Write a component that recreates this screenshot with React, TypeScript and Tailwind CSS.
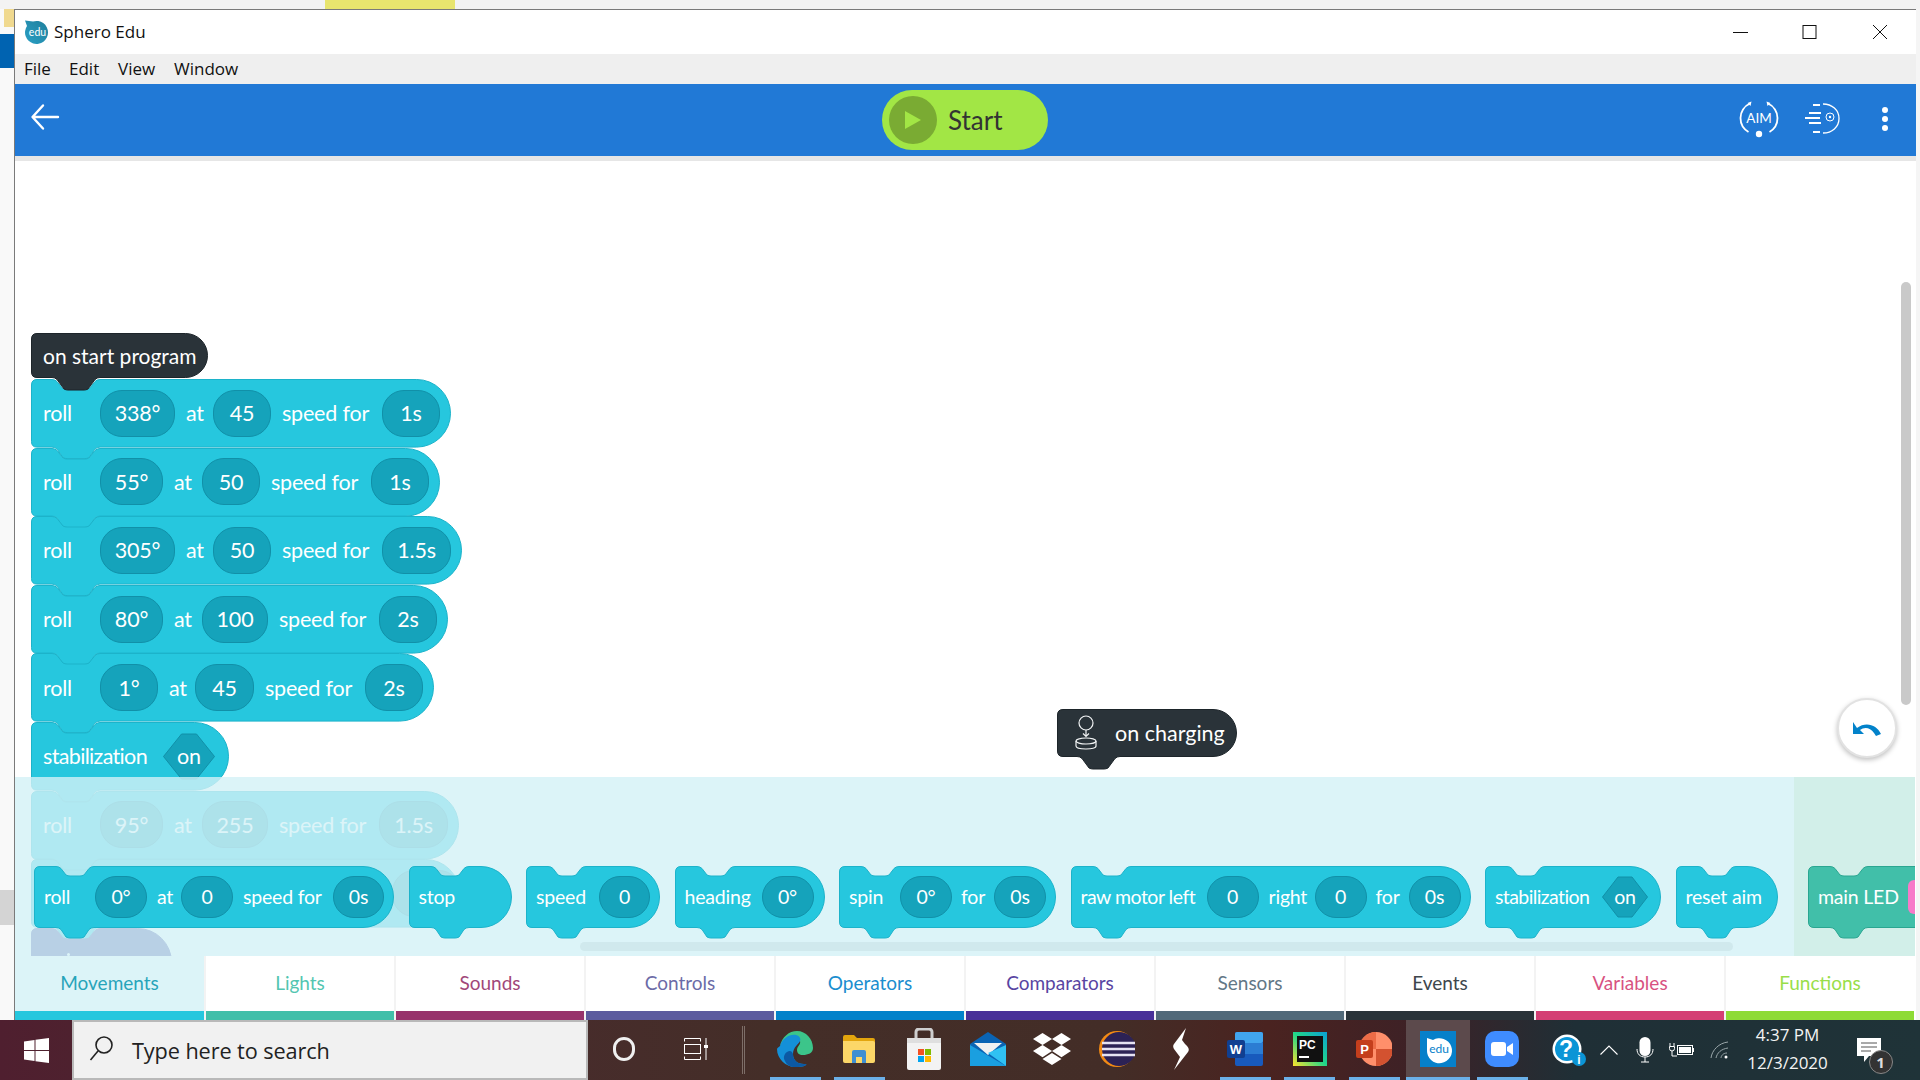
import React from "react";
import { FaDropbox } from "react-icons/fa";

type Part =
  | { t: string; w: number; pl?: number; ls?: number }
  | { p: string; w: number }
  | { h: string; w: number };

function blockPath(w: number, h: number, nx: number, nw: number, d: number, notch: boolean, bump: boolean) {
  const r = 6;
  const R = h / 2;
  let s = `M ${r} 0.5 `;
  if (notch) {
    s += `L ${nx} 0.5 Q ${nx + 3} 0.5 ${nx + 5} 2.5 L ${nx + d} ${d - 1} Q ${nx + d + 2} ${d} ${nx + d + 4} ${d} L ${nx + nw - d - 4} ${d} Q ${nx + nw - d - 2} ${d} ${nx + nw - d} ${d - 1} L ${nx + nw - 5} 2.5 Q ${nx + nw - 3} 0.5 ${nx + nw} 0.5 `;
  }
  s += `L ${w - R} 0.5 A ${R - 0.5} ${R - 0.5} 0 0 1 ${w - R} ${h - 0.5} `;
  if (bump) {
    s += `L ${nx + nw} ${h - 0.5} Q ${nx + nw - 3} ${h - 0.5} ${nx + nw - 5} ${h + 1.5} L ${nx + nw - d} ${h + d - 1} Q ${nx + nw - d - 2} ${h + d} ${nx + nw - d - 4} ${h + d} L ${nx + d + 4} ${h + d} Q ${nx + d + 2} ${h + d} ${nx + d} ${h + d - 1} L ${nx + 5} ${h + 1.5} Q ${nx + 3} ${h - 0.5} ${nx} ${h - 0.5} `;
  }
  s += `L ${r} ${h - 0.5} Q 0.5 ${h - 0.5} 0.5 ${h - r} L 0.5 ${r} Q 0.5 0.5 ${r} 0.5 Z`;
  return s;
}

function Hex({ w, h, label }: { w: number; h: number; label: string }) {
  return (
    <div className="relative flex shrink-0 items-center justify-center" style={{ width: w, height: h }}>
      <svg className="absolute inset-0" width={w} height={h}>
        <path
          d={`M ${h / 2 - 4} 1 L ${w - h / 2 + 4} 1 L ${w - 1.5} ${h / 2} L ${w - h / 2 + 4} ${h - 1} L ${h / 2 - 4} ${h - 1} L 1.5 ${h / 2} Z`}
          fill="#15a3bb"
          stroke="#1190a8"
          strokeLinejoin="round"
        />
      </svg>
      <span className="relative">{label}</span>
    </div>
  );
}

function Block({
  w,
  h,
  parts,
  fill = "#26c7de",
  stroke = "#1cb3ca",
  pad = 12,
  pillH = 47,
  nx = 21,
  nw = 48,
  d = 11,
  notch = true,
  bump = true,
  small = false,
}: {
  w: number;
  h: number;
  parts: Part[];
  fill?: string;
  stroke?: string;
  pad?: number;
  pillH?: number;
  nx?: number;
  nw?: number;
  d?: number;
  notch?: boolean;
  bump?: boolean;
  small?: boolean;
}) {
  return (
    <div className="relative shrink-0" style={{ width: w, height: h }}>
      <svg className="absolute left-0 top-0 overflow-visible" width={w} height={h}>
        <path d={blockPath(w, h, nx, nw, d, notch, bump)} fill={fill} stroke={stroke} />
      </svg>
      <div
        className={
          small
            ? "relative flex h-full items-center whitespace-nowrap text-[19.5px] tracking-[-0.2px] text-white"
            : "relative flex h-full items-center whitespace-nowrap text-[21.5px] tracking-[-0.2px] text-white"
        }
        style={{ paddingLeft: pad }}
      >
        {parts.map((x, i) => {
          if ("t" in x)
            return (
              <span key={i} className="shrink-0" style={{ width: x.w, paddingLeft: x.pl ?? 0, letterSpacing: x.ls }}>
                {x.t}
              </span>
            );
          if ("p" in x)
            return (
              <span
                key={i}
                className="flex shrink-0 items-center justify-center rounded-[22px] border border-[#1190a8] bg-[#15a3bb]"
                style={{ width: x.w, height: pillH }}
              >
                {x.p}
              </span>
            );
          return <Hex key={i} w={x.w} h={pillH} label={x.h} />;
        })}
      </div>
    </div>
  );
}

const roll = (a: string, aw: number, s: string, sw: number, t: string, tw: number, atw = 38, rw = 57): Part[] => [
  { t: "roll", w: rw },
  { p: a, w: aw },
  { t: "at", w: atw, pl: 11 },
  { p: s, w: sw },
  { t: "speed for", w: 111, pl: 11 },
  { p: t, w: tw },
];

function Stack() {
  return (
    <div className="absolute left-[16px] top-[172px] flex flex-col font-['Lato',sans-serif]">
      <div className="relative z-[9] h-[46px] w-[177px]">
        <svg className="absolute left-0 top-0 overflow-visible" width={177} height={45}>
          <path d={blockPath(177, 45, 21, 48, 12, false, true)} fill="#2a3339" stroke="#1d252a" />
        </svg>
        <div className="relative flex h-[45px] items-center pl-[12px] text-[21px] text-white">on start program</div>
      </div>
      <div className="relative z-[1] flex flex-col">
        <div className="h-[68.6px]"><Block w={420} h={68.6} parts={roll("338°", 75, "45", 58, "1s", 58)} /></div>
        <div className="h-[68.6px]"><Block w={409} h={68.6} parts={roll("55°", 63, "50", 58, "1s", 58, 39)} /></div>
        <div className="h-[68.6px]"><Block w={431} h={68.6} parts={roll("305°", 75, "50", 58, "1.5s", 69)} /></div>
        <div className="h-[68.6px]"><Block w={417} h={68.6} parts={roll("80°", 63, "100", 66, "2s", 58, 39)} /></div>
        <div className="h-[68.6px]"><Block w={403} h={68.6} parts={roll("1°", 58, "45", 59, "2s", 58, 37)} /></div>
        <div className="h-[68.6px]">
          <Block w={198} h={68.6} parts={[{ t: "stabilization", w: 119, ls: -0.65 }, { h: "on", w: 54 }]} />
        </div>
        <div className="h-[68.6px]"><Block w={428} h={68.6} parts={roll("95°", 63, "255", 66, "1.5s", 69, 39)} /></div>
        <div className="h-[68.6px]">
          <Block w={429} h={68.6} parts={[{ t: "", w: 349 }, { p: "", w: 69 }]} />
        </div>
        <div className="relative h-[68.6px]">
          <Block w={141} h={68.6} fill="#4b4ba0" stroke="#4b4ba0" parts={[]} />
          <div className="absolute left-[36px] top-[25px] h-[3px] w-[3px] rounded-full bg-white" />
        </div>
      </div>
    </div>
  );
}

function Charging() {
  return (
    <div className="absolute left-[1042px] top-[548px] h-[48px] w-[180px] font-['Lato',sans-serif]">
      <svg className="absolute left-0 top-0 overflow-visible" width={180} height={48}>
        <path d={blockPath(180, 48, 20, 43, 12, false, true)} fill="#2a3339" stroke="#1d252a" />
      </svg>
      <div className="relative flex h-full items-center pl-[17px] text-[21.5px] text-white">
        <svg width="24" height="36" viewBox="0 0 24 36" fill="none" stroke="#f2f4f5" strokeWidth="1.2" className="mr-[17px] shrink-0">
          <circle cx="12" cy="8" r="7" />
          <path d="M12 15v6M9 18.5l3 3 3-3" />
          <ellipse cx="12" cy="26" rx="10" ry="3" />
          <path d="M2 26v5c0 2 4.500 3 10 3s10-1 10-3v-5" />
        </svg>
        on charging
      </div>
    </div>
  );
}

function TrayRow() {
  const common = { h: 62, pad: 10, pillH: 42, nx: 22, nw: 38, d: 10, small: true } as const;
  return (
    <div className="flex items-start gap-[14.5px] pl-[19px] pt-[89px] font-['Lato',sans-serif]">
      <Block
        {...common}
        w={360}
        parts={[
          { t: "roll", w: 51 },
          { p: "0°", w: 52 },
          { t: "at", w: 34, pl: 10 },
          { p: "0", w: 52 },
          { t: "speed for", w: 100, pl: 10 },
          { p: "0s", w: 51 },
        ]}
      />
      <Block {...common} w={103} parts={[{ t: "stop", w: 60 }]} />
      <Block {...common} w={134} parts={[{ t: "speed", w: 63 }, { p: "0", w: 51 }]} />
      <Block {...common} w={150} parts={[{ t: "heading", w: 77 }, { p: "0°", w: 52 }]} />
      <Block
        {...common}
        w={217}
        parts={[
          { t: "spin", w: 51 },
          { p: "0°", w: 52 },
          { t: "for", w: 42, pl: 9 },
          { p: "0s", w: 52 },
        ]}
      />
      <Block
        {...common}
        w={400}
        parts={[
          { t: "raw motor left", w: 126, ls: -0.5 },
          { p: "0", w: 52 },
          { t: "right", w: 56, pl: 10 },
          { p: "0", w: 52 },
          { t: "for", w: 42, pl: 9 },
          { p: "0s", w: 52 },
        ]}
      />
      <Block {...common} w={176} parts={[{ t: "stabilization", w: 106, ls: -0.6 }, { h: "on", w: 48 }]} />
      <Block {...common} w={102} parts={[{ t: "reset aim", w: 85 }]} />
    </div>
  );
}

function Tray() {
  return (
    <div className="absolute bottom-0 left-0 z-20 flex h-[179px] w-[1900px] overflow-hidden">
      <div className="relative w-[1779px] shrink-0 bg-[#d3f1f6]/80">
        <TrayRow />
        <div className="absolute bottom-[5px] left-[565px] h-[9px] w-[1153px] rounded-full bg-[#d0e9ed]" />
      </div>
      <div className="relative flex-1 bg-[#d2efe9] pl-[14px] pt-[89px] font-['Lato',sans-serif]">
        <Block h={62} pad={10} pillH={42} nx={22} nw={38} d={10} small w={170} fill="#41bfa9" stroke="#2aa691" parts={[{ t: "main LED", w: 90 }]} />
        <div className="absolute left-[114px] top-[103px] h-[34px] w-[10px] rounded-l-[6px] bg-[#f77ac9]" />
      </div>
    </div>
  );
}

const tabs = [
  ["Movements", "text-[#129cb4]", "bg-[#26c7de]"],
  ["Lights", "text-[#41bfa9]", "bg-[#41bfa9]"],
  ["Sounds", "text-[#97336b]", "bg-[#97336b]"],
  ["Controls", "text-[#5c5b9e]", "bg-[#5c5b9e]"],
  ["Operators", "text-[#0282ca]", "bg-[#0282ca]"],
  ["Comparators", "text-[#483098]", "bg-[#483098]"],
  ["Sensors", "text-[#516979]", "bg-[#516979]"],
  ["Events", "text-[#2a3339]", "bg-[#2a3339]"],
  ["Variables", "text-[#d43f74]", "bg-[#d43f74]"],
  ["Functions", "text-[#8edb35]", "bg-[#8edb35]"],
];

function Tabs() {
  return (
    <div className="flex h-[64px] font-['Lato',sans-serif]">
      {tabs.map(([n, t, b], i) => (
        <div key={n} className={i === 0 ? "flex w-[189px] flex-col bg-[#dcf4f8]" : "flex w-[190px] flex-col border-l-2 border-[#f3f3f3] bg-white"}>
          <div className={`flex flex-1 items-center justify-center pb-[1px] text-[19px] opacity-90 ${t}`}>{n}</div>
          <div className={`h-[9px] ${b}`} />
        </div>
      ))}
    </div>
  );
}

function Header() {
  return (
    <div className="flex h-[72px] shrink-0 items-center bg-[#2179d6]">
      <svg width="30" height="28" viewBox="0 0 30 28" className="ml-[15px] mt-[-7px] shrink-0" fill="none" stroke="#fff" strokeWidth="2.4" strokeLinecap="round" strokeLinejoin="round">
        <path d="M28 14H3M13 2.500 2.500 14 13 25.500" />
      </svg>
      <div className="ml-[822px] flex h-[60px] w-[166px] shrink-0 items-center rounded-[30px] bg-[#a2e645] pl-[7px]">
        <div className="flex h-[48px] w-[48px] items-center justify-center rounded-full bg-[#7aab33]">
          <svg width="18" height="20" viewBox="0 0 18 20"><path d="M1 1l16 9-16 9z" fill="#a2e645" /></svg>
        </div>
        <span className="ml-[11px] font-['Lato',sans-serif] text-[26px] text-[#333]">Start</span>
      </div>
      <svg width="40" height="38" viewBox="0 0 40 38" className="ml-[691px] mt-[-3px] shrink-0" fill="none" stroke="#fff" strokeWidth="1.8">
        <path d="M11 3.500C5 6 1.500 12 1.500 18c0 6 3 11 8 14M29 3.500c6 2.500 9.500 8.500 9.500 14.500 0 6-3 11-8 14" />
        <path d="M8.500 3l4-1.500-1 4.500zM31.500 3l-4-1.500 1 4.500z" fill="#fff" stroke="none" />
        <circle cx="20" cy="34" r="3.200" fill="#fff" stroke="none" />
        <text x="20" y="23" textAnchor="middle" fontFamily="Lato, sans-serif" fontSize="13.500" fill="#fff" stroke="none">AIM</text>
      </svg>
      <svg width="38" height="32" viewBox="0 0 38 32" className="ml-[25px] mt-[-3px] shrink-0" fill="none" stroke="#fff" strokeWidth="2">
        <path d="M9 2h7M5 10h12M1 15h15M5 20h12M9 29h7" />
        <path d="M19 1c9 0 16 6 16 14.500S28 30 19 30" strokeWidth="1.300" />
        <circle cx="26" cy="14" r="4" strokeWidth="1" />
        <circle cx="26" cy="14" r="1.200" fill="#fff" stroke="none" />
      </svg>
      <div className="ml-[40px] mt-[-2px] flex shrink-0 flex-col gap-[3px]">
        <div className="h-[6px] w-[6px] rounded-full bg-white" />
        <div className="h-[6px] w-[6px] rounded-full bg-white" />
        <div className="h-[6px] w-[6px] rounded-full bg-white" />
      </div>
    </div>
  );
}

function TitleBar() {
  return (
    <div className="flex h-[44px] shrink-0 items-center bg-white font-['Open_Sans',sans-serif]">
      <svg width="24" height="24" viewBox="0 0 24 24" className="ml-[10px] shrink-0">
        <defs>
          <linearGradient id="edu" x1="0" y1="1" x2="1" y2="0">
            <stop offset="0" stopColor="#2a9fc4" />
            <stop offset="1" stopColor="#1f7f9c" />
          </linearGradient>
        </defs>
        <path d="M0 0.500 8 1.500A11.500 11.500 0 1 1 2 6z" fill="url(#edu)" />
        <text x="12.500" y="16" textAnchor="middle" fontFamily="Lato, sans-serif" fontSize="10.500" fill="#fff">edu</text>
      </svg>
      <span className="ml-[5px] text-[17px] text-[#111]">Sphero Edu</span>
      <div className="ml-auto flex items-center">
        <svg width="16" height="16" viewBox="0 0 16 16" className="mr-[53px] shrink-0" stroke="#111" fill="none"><path d="M0 8.500h15" /></svg>
        <svg width="16" height="16" viewBox="0 0 16 16" className="mr-[54px] shrink-0" stroke="#111" fill="none"><rect x="1" y="1.500" width="13" height="13" /></svg>
        <svg width="16" height="16" viewBox="0 0 16 16" className="mr-[28px] shrink-0" stroke="#111" fill="none"><path d="M1 1l14 14M15 1L1 15" /></svg>
      </div>
    </div>
  );
}

function MenuBar() {
  const items = [
    ["File", "ml-[9px] w-[45px]"],
    ["Edit", "w-[49px]"],
    ["View", "w-[56px]"],
    ["Window", ""],
  ];
  return (
    <div className="flex h-[30px] shrink-0 items-center bg-[#efefef] font-['Open_Sans',sans-serif] text-[17px] text-[#111]">
      {items.map(([t, m]) => (
        <span key={t} className={m}>{t}</span>
      ))}
    </div>
  );
}

function Undo() {
  return (
    <div className="absolute left-[1822px] top-[537px] z-10 flex h-[60px] w-[60px] items-center justify-center rounded-full border-2 border-[#e2e2e2] bg-white shadow-[0_2px_5px_rgba(0,0,0,0.25)]">
      <svg width="28" height="18" viewBox="0 0 28 18">
        <path d="M0 3v12h11l-4-4c4-3 10-3 14 3l2 3 5-2c-4-9-15-13-24-6z" fill="#0282ca" />
      </svg>
    </div>
  );
}

function Slot({ children, className = "" }: { children?: React.ReactNode; className?: string }) {
  return <div className={`relative flex h-full w-[64.3px] shrink-0 items-center justify-center pb-[3px] ${className}`}>{children}</div>;
}

function Bar() {
  return <div className="absolute bottom-0 left-[7px] h-[3px] w-[51px] bg-[#6bb0e8]" />;
}

function Taskbar() {
  return (
    <div className="flex h-[60px] shrink-0 items-center bg-[linear-gradient(90deg,#4f1f2f_0%,#4a2a2e_20%,#442e28_40%,#432d27_58%,#4a2320_66%,#3d2126_74%,#1f2f36_82%,#1f3338_100%)]">
      <div className="flex w-[72px] shrink-0 items-center justify-center">
        <svg width="25" height="25" viewBox="0 0 25 25" fill="#fff"><path d="M0 3.500 10.500 2v10H0zM11.500 1.800 25 0v12H11.500zM0 13h10.500v10L0 21.500zM11.500 13H25v12l-13.500-1.800z" /></svg>
      </div>
      <div className="flex h-[60px] w-[516px] shrink-0 items-center border-2 border-[#b9b9b9] bg-[#f1f1f1] font-['Open_Sans',sans-serif]">
        <svg width="25" height="28" viewBox="0 0 25 28" fill="none" stroke="#222" strokeWidth="1.600" className="ml-[15px] mt-[-2px] shrink-0"><circle cx="15" cy="10" r="8" /><path d="M9 16 1.500 25" /></svg>
        <span className="ml-[18px] mt-[2px] text-[21.7px] tracking-[-0.1px] text-[#222]">Type here to search</span>
      </div>
      <div className="flex h-full w-[72px] shrink-0 items-center justify-center pb-[3px]">
        <div className="h-[24px] w-[22px] rounded-full border-[3.5px] border-[#f0f0f0]" />
      </div>
      <div className="flex h-full w-[72px] shrink-0 items-center justify-center pb-[3px]">
        <svg width="24" height="22" viewBox="0 0 24 22" fill="none" stroke="#fff" strokeWidth="1"><path d="M0.500 3.500v-3h16v3M0.500 18.500v3h16v-3" /><rect x="0.500" y="6.500" width="16" height="9" /><path d="M22 0v7M22 10v12" /><rect x="20" y="7" width="4" height="3" fill="#fff" stroke="none" /></svg>
      </div>
      <div className="ml-[10px] mr-[18px] h-[48px] w-[3px] border-x border-[#7d6e68]" />
      <Slot><Bar />
        <svg width="36" height="36" viewBox="0 0 36 36">
          <path d="M3 15C5 6 12 0 20 0c9 0 16 8 16 17 0 5-5 7-10 7-4 0-6-2-6-5 0-4 4-5 3-9C21 6 15 5 11 8c-4 2-7 5-8 7z" fill="#3cc58a" />
          <path d="M3 15c2-7 9-12 16-11 4 1 5 4 4 6-1 3-7 6-7 13 0 6 4 10 11 10 2 0 3 0 2 1-3 2-7 2-11 2C9 36 0 28 0 18c0-1 2-2 3-3z" fill="#1490d8" />
          <path d="M16 23c0 6 4 10 11 10 2 0 3 0 2 1-3 2-7 2-11 2-5 0-8-2-10-6-2-3-1-7 2-9 3-2 5-1 6 2z" fill="#0c59a4" />
        </svg>
      </Slot>
      <Slot><Bar />
        <svg width="32" height="28" viewBox="0 0 32 28">
          <path d="M0 2a2 2 0 0 1 2-2h9l3 3h16a2 2 0 0 1 2 2v3H0z" fill="#e3a50d" />
          <path d="M0 6h30a2 2 0 0 1 2 2v18a2 2 0 0 1-2 2H2a2 2 0 0 1-2-2z" fill="#fcd768" />
          <path d="M9 17a2 2 0 0 1 2-2h10a2 2 0 0 1 2 2v11h-4v-6h-6v6H9z" fill="#3f8fd2" />
        </svg>
      </Slot>
      <Slot>
        <svg width="34" height="42" viewBox="0 0 34 42">
          <path d="M9 10V4a3 3 0 0 1 3-3h10a3 3 0 0 1 3 3v6" fill="none" stroke="#cfcfcf" strokeWidth="3" />
          <rect x="0" y="10" width="34" height="32" rx="2" fill="#f3f3f3" />
          <rect x="0" y="10" width="34" height="5" fill="#dfdfdf" />
          <rect x="11" y="21" width="6" height="6" fill="#f25022" />
          <rect x="18" y="21" width="6" height="6" fill="#7fba00" />
          <rect x="11" y="28" width="6" height="6" fill="#00a4ef" />
          <rect x="18" y="28" width="6" height="6" fill="#ffb900" />
        </svg>
      </Slot>
      <Slot>
        <svg width="36" height="34" viewBox="0 0 36 34">
          <path d="M0 12 18 0l18 12v22H0z" fill="#0a64b4" />
          <path d="M4 11h28L18 23z" fill="#f1f1f1" />
          <path d="M0 13 36 34H0z" fill="#1a9fe0" />
          <path d="M36 13v21L18 21z" fill="#30c1f2" />
        </svg>
      </Slot>
      <Slot>
        <FaDropbox className="text-[38px] text-white" />
      </Slot>
      <Slot>
        <svg width="36" height="36" viewBox="0 0 36 36">
          <circle cx="18" cy="18" r="18" fill="#f28a14" />
          <circle cx="20" cy="18" r="17" fill="#2c2255" />
          <path d="M3 12h34M3 18h34M3 24h34" stroke="#e6e3f2" strokeWidth="2.500" />
        </svg>
      </Slot>
      <Slot>
        <svg width="18" height="42" viewBox="0 0 18 42"><path d="M14 0 2 16c-2 3 0 5 3 9l3 4-6 13 14-18c2-3 0-5-3-8l-3-4z" fill="#fff" /></svg>
      </Slot>
      <Slot><Bar />
        <svg width="36" height="36" viewBox="0 0 36 36">
          <rect x="8" y="1" width="28" height="34" rx="2" fill="#185abd" />
          <rect x="8" y="1" width="28" height="11" rx="2" fill="#41a5ee" />
          <rect x="8" y="12" width="28" height="11" fill="#2b7cd3" />
          <rect x="0" y="9" width="18" height="18" rx="2" fill="#103f91" />
          <text x="9" y="23" textAnchor="middle" fontFamily="Liberation Sans, sans-serif" fontWeight="700" fontSize="13" fill="#fff">W</text>
        </svg>
      </Slot>
      <Slot><Bar />
        <svg width="34" height="34" viewBox="0 0 34 34">
          <defs><linearGradient id="pc" x1="0" y1="1" x2="1" y2="0"><stop offset="0" stopColor="#ffe22b" /><stop offset=".5" stopColor="#21d789" /><stop offset="1" stopColor="#09a0d8" /></linearGradient></defs>
          <rect width="34" height="34" fill="url(#pc)" />
          <rect x="4" y="4" width="26" height="26" fill="#111" />
          <text x="6" y="17" fontFamily="Liberation Sans, sans-serif" fontWeight="700" fontSize="12" fill="#fff">PC</text>
          <rect x="6" y="24" width="10" height="2" fill="#fff" />
        </svg>
      </Slot>
      <Slot><Bar />
        <svg width="36" height="36" viewBox="0 0 36 36">
          <circle cx="20" cy="18" r="17" fill="#ff8f6b" />
          <path d="M20 18h17a17 17 0 0 1-17 17z" fill="#d35230" />
          <path d="M20 18V1a17 17 0 0 0-17 17z" fill="#ed6c47" />
          <rect x="0" y="9" width="17" height="18" rx="2" fill="#c43e1c" />
          <text x="8.500" y="23" textAnchor="middle" fontFamily="Liberation Sans, sans-serif" fontWeight="700" fontSize="13" fill="#fff">P</text>
        </svg>
      </Slot>
      <Slot className="bg-[#5c4a4c]">
        <div className="absolute bottom-0 left-0 h-[3px] w-full bg-[#6bb0e8]" />
        <svg width="36" height="36" viewBox="0 0 36 36">
          <rect width="36" height="36" fill="#0680ca" />
          <path d="M7 7l6 2A12.500 12.500 0 1 1 7 19z" fill="#fff" />
          <text x="19" y="22" textAnchor="middle" fontFamily="Lato, sans-serif" fontSize="12" fill="#0680ca">edu</text>
        </svg>
      </Slot>
      <Slot><Bar />
        <div className="flex h-[36px] w-[34px] items-center justify-center rounded-[10px] bg-[#3f8cff]">
          <svg width="22" height="14" viewBox="0 0 22 14"><rect width="15" height="14" rx="3" fill="#fff" /><path d="M16 5l6-4v12l-6-4z" fill="#fff" /></svg>
        </div>
      </Slot>
      <div className="ml-[16px] flex h-full shrink-0 items-center">
        <svg width="36" height="32" viewBox="0 0 36 32" className="shrink-0">
          <circle cx="16" cy="15" r="14.500" fill="#fff" />
          <circle cx="16" cy="15" r="12" fill="#0b95d6" />
          <text x="15" y="23" textAnchor="middle" fontFamily="Liberation Sans, sans-serif" fontWeight="700" fontSize="23" fill="#fff">?</text>
          <circle cx="28" cy="25" r="7" fill="#0b95d6" />
          <text x="28" y="30" textAnchor="middle" fontFamily="Liberation Sans, sans-serif" fontWeight="700" fontSize="12" fill="#fff">i</text>
        </svg>
        <svg width="18" height="10" viewBox="0 0 18 10" fill="none" stroke="#fff" strokeWidth="1.100" className="ml-[13px] shrink-0"><path d="M.5 9.500 9 1l8.500 8.500" /></svg>
        <svg width="18" height="26" viewBox="0 0 18 26" fill="none" className="ml-[18px] shrink-0"><rect x="3.500" y="0" width="11" height="19" rx="5.500" fill="#fff" /><path d="M1 12c0 5 3 8 8 8s8-3 8-8M9 20v5M5 25h8" stroke="#fff" /></svg>
        <svg width="26" height="16" viewBox="0 0 26 16" fill="none" stroke="#fff" className="ml-[15px] shrink-0"><rect x="8.500" y="3.500" width="15" height="9" /><rect x="10" y="5" width="12" height="6" fill="#fff" stroke="none" /><path d="M24.500 6v4M1 1v3M5 1v3M.5 4.500h5v2a2.500 2.500 0 0 1-5 0zM3 9v5h5" /></svg>
        <svg width="18" height="18" viewBox="0 0 18 18" fill="none" stroke="#9aa7aa" className="ml-[15px] shrink-0"><path d="M1 17C2 9 9 2 18 1M6 17c1-5 5-9 12-10M11 17c0-2 2-5 6-5" /><circle cx="16" cy="16" r="1.500" fill="#fff" stroke="none" /></svg>
        <div className="ml-[15px] flex w-[90px] shrink-0 flex-col items-center gap-[4px] pb-[2px] font-['Open_Sans',sans-serif] text-[17px] leading-[24px] text-[#f4f4f4]">
          <span>4:37 PM</span>
          <span>12/3/2020</span>
        </div>
        <div className="relative ml-[24px] mt-[18px] h-[24px] w-[24px] shrink-0 self-start">
          <svg width="24" height="24" viewBox="0 0 24 24"><path d="M0 0h24v18H12l-5 6v-6H0z" fill="#fff" /><path d="M4 5h16M4 9h16M4 13h10" stroke="#555" strokeWidth="1" /></svg>
          <div className="absolute left-[12px] top-[12px] flex h-[24px] w-[24px] items-center justify-center rounded-full border border-[#888] bg-[#333] font-['Open_Sans',sans-serif] text-[15px] font-bold text-[#ddd]">1</div>
        </div>
      </div>
    </div>
  );
}

export default function App() {
  return (
    <div className="flex h-[1080px] w-[1920px] flex-col overflow-hidden bg-[#f5f5f5]">
      <div className="flex h-[9px] shrink-0 bg-[#f3f3f3]">
        <div className="ml-[325px] h-full w-[130px] bg-[#e8e56e]" />
      </div>
      <div className="flex h-[1011px] shrink-0">
        <div className="flex w-[14px] shrink-0 flex-col bg-[#f9f9f9]">
          <div className="ml-[4px] h-[18px] w-[10px] shrink-0 bg-[#f0d98f]" />
          <div className="h-[7px] shrink-0" />
          <div className="h-[34px] shrink-0 bg-[#0063b1]" />
          <div className="h-[822px] shrink-0" />
          <div className="h-[35px] shrink-0 bg-[#d4d4d4]" />
        </div>
        <div className="flex w-[1902px] shrink-0 flex-col border-l border-t border-[#7a7a7a] bg-white">
          <TitleBar />
          <MenuBar />
          <Header />
          <div className="h-[5px] shrink-0 bg-[#e6e6e6]" />
          <div className="relative h-[795px] shrink-0 overflow-hidden bg-white">
            <Stack />
            <Charging />
            <Undo />
            <div className="absolute left-[1886px] top-[121px] h-[423px] w-[10px] rounded-full bg-[#c9c9c9]" />
            <Tray />
          </div>
          <Tabs />
        </div>
      </div>
      <Taskbar />
    </div>
  );
}
